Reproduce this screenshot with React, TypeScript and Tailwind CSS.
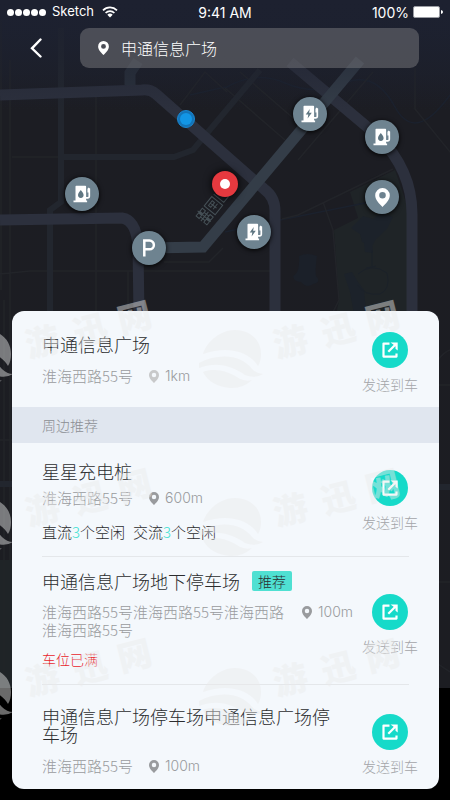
import { useState } from 'react';
import { clsx } from 'clsx';

type PinKind = 'charge' | 'fuel' | 'parking' | 'place' | 'target' | 'me';

interface MapPin {
  kind: PinKind;
  label: string;
  x: number;
  y: number;
}

interface Place {
  id: number;
  name: string;
  address: string;
  distance: string;
  recommended?: boolean;
  full?: boolean;
  slots?: { type: string; free: number }[];
}

const MAP_W = 450;
const MAP_H = 688;

const pins: MapPin[] = [
  { kind: 'me', label: '我的位置', x: 186, y: 119 },
  { kind: 'charge', label: '充电站', x: 310, y: 114 },
  { kind: 'fuel', label: '加油站', x: 382, y: 137 },
  { kind: 'fuel', label: '加油站', x: 82, y: 194 },
  { kind: 'place', label: '地点', x: 382, y: 197 },
  { kind: 'charge', label: '充电站', x: 254, y: 232 },
  { kind: 'parking', label: '停车场', x: 149, y: 248 },
  { kind: 'target', label: '目的地', x: 225, y: 184 },
];

const destination: Place = {
  id: 1,
  name: '申通信息广场',
  address: '淮海西路55号',
  distance: '1km',
};

const nearby: Place[] = [
  {
    id: 2,
    name: '星星充电桩',
    address: '淮海西路55号',
    distance: '600m',
    slots: [
      { type: '直流', free: 3 },
      { type: '交流', free: 3 },
    ],
  },
  {
    id: 3,
    name: '申通信息广场地下停车场',
    address: '淮海西路55号淮海西路55号淮海西路淮海西路55号',
    distance: '100m',
    recommended: true,
    full: true,
  },
  {
    id: 4,
    name: '申通信息广场停车场申通信息广场停车场',
    address: '淮海西路55号',
    distance: '100m',
  },
];

function PinIcon({ className }: { className?: string }) {
  return (
    <svg viewBox="0 0 20 26" className={className} fill="currentColor" aria-hidden="true">
      <path
        fillRule="evenodd"
        d="M10 0a10 10 0 0 0-10 10c0 6.500 6 12 10 16 4-4 10-9.500 10-16A10 10 0 0 0 10 0Zm0 5.500a4.500 4.500 0 1 1 0 9 4.500 4.500 0 0 1 0-9Z"
      />
    </svg>
  );
}

function StationIcon({ kind }: { kind: 'charge' | 'fuel' }) {
  return (
    <svg viewBox="0 0 18 18" className="size-[18px]" aria-hidden="true">
      <path fill="#fff" d="M2.500 1.500q0-.8.800-.8h9q.8 0 .8.800v14h1v1.800H.5v-1.800h2z" />
      <path fill="none" stroke="#fff" strokeWidth="1.700" d="M13 12.800h2q1.300 0 1.300-1.300V3.500M15.300 7.500V4l1-1" />
      {kind === 'charge' ? (
        <path fill="#5f7682" d="M8.800 4 4.700 9.500h2.600l-.7 4 4.200-5.700H8.100z" />
      ) : (
        <path fill="#5f7682" d="M7.800 5C6.500 6.800 5 8.300 5 10.100a2.800 2.800 0 0 0 5.600 0C10.600 8.300 9.100 6.800 7.800 5Z" />
      )}
    </svg>
  );
}

function SendIcon() {
  return (
    <svg viewBox="0 0 16 16" className="size-4" fill="none" stroke="#fff" strokeWidth="2.200" aria-hidden="true">
      <path strokeLinejoin="round" d="M7.500 1.600H1.500v13h13V11.500" />
      <path d="M6.300 9.800 13 3" />
      <path fill="#fff" stroke="none" d="M8.500.5h7.200v8l-2.200-1.800V4.600L11.300 2.600z" />
    </svg>
  );
}

function Roads() {
  return (
    <svg
      viewBox={`0 0 ${MAP_W} ${MAP_H}`}
      className="absolute inset-0 size-full"
      fill="none"
      aria-hidden="true"
    >
      <defs>
        <linearGradient id="night" x1="0" y1="0" x2="0" y2="1">
          <stop offset="0" stopColor="#1d2130" />
          <stop offset=".16" stopColor="#1c1d23" />
          <stop offset="1" stopColor="#1c1d22" />
        </linearGradient>
        <linearGradient id="haze" x1="0" y1="0" x2="0" y2="1">
          <stop offset="0" stopColor="#1d2130" />
          <stop offset="1" stopColor="#1d2130" stopOpacity="0" />
        </linearGradient>
      </defs>
      <rect width={MAP_W} height={MAP_H} fill="url(#night)" />

      {/* park and water */}
      <path fill="#1f2427" d="m350 192 45-22 12 35v115h-72l4-20-5-70 24-12z" />
      <path fill="#1f2427" d="M0 560h12v128H0z" />
      <path fill="#1b2029" d="M299 256q8-4 18 0-2 14-1 20 6 6-3 8-6 5-12-2-7 0-8-6 7-2 6-20z" />
      <path
        fill="#1c222a"
        d="m351 228 12-12 10 3 8-7 12 5-6 12-11 10-4 7-10-4-2-8zM364 243h8l1 10-8-1zM344 274l8-2 6 10 6 8 2 22-12 2-4-22z"
      />
      <path stroke="#1b2129" d="M372 250v16M366 268l10-2M358 274q14-12 29-1 4 16-7 21-16 2-22-9" />

      {/* streams */}
      <path
        stroke="#1b212d"
        strokeWidth="1.500"
        d="M225 88q30-18 60-5t60 0 50 24 55-12M190 95l35-8M225 232l55-12 90-18"
      />

      {/* side streets */}
      <g stroke="#222429" strokeWidth="1.500">
        <path d="M1 20v270M10 60v500M96 96v215M128 271v44M12 157h48M0 274l30-3h244" />
        <path d="m180 105 25-33 22 20M240 72l60 52M225 88l60 52M415 68v41l40 49M298 160l75-88" />
        <path d="m282 219 16-4 95-46M323 202l10 28 6 70-8 16M164 262h45l14-14" />
        <path d="M4 300v388M0 440h12M438 360q6-8 12-10M438 385h12M438 582h12M438 664l12 8" />
      </g>

      {/* secondary roads */}
      <g stroke="#22262e" strokeWidth="6">
        <path d="M61 28v174l-11 8v105M61 157h113l19-7 67-80" />
        <path d="M0 484h12M438 487h12" />
      </g>

      {/* main roads */}
      <g stroke="#2c303d" strokeWidth="11">
        <path d="m0 95 142-5q8-1 14 4l108 95q11 8 11 22v110" />
        <path d="m290 62 88 74q34 34 34 78v100" />
        <path d="m0 220 122-2q14 2 16 28l1 70" />
      </g>
      <g stroke="#343d48" strokeWidth="11">
        <path d="m360 60-157 187-54 1" />
        <path stroke="#2a313c" d="M130 85V73l8-12" />
      </g>

      {/* building blocks */}
      <g transform="rotate(-51 207 212)" stroke="#465157" strokeWidth="1">
        <path d="M197 206h4v4h-4zM203 206h4v4h-4zM197 216h4v4h-4zM203 216h4v4h-4zM196 213h12M202 204v17M199 210v6M205 210v6" />
        <path d="M210 206h12v14h-12zM213 209h6v3h-6zM213 215h7M216 209v8M225 206v13h11M228 209h5" />
      </g>
      <rect width={MAP_W} height="110" fill="url(#haze)" />
    </svg>
  );
}

function PinMarker({ pin }: { pin: MapPin }) {
  const { kind } = pin;
  return (
    <button
      type="button"
      aria-label={pin.label}
      className={clsx(
        'absolute flex -translate-x-1/2 -translate-y-1/2 items-center justify-center rounded-full text-white',
        kind === 'target' && 'size-[26px] bg-[#e5393f] shadow-[0_0_8px_#000]',
        kind === 'me' && 'size-[18px] border border-[#1a86d0] bg-[#1374b8]',
        kind !== 'target' && kind !== 'me' && 'size-[34px] bg-[#6e8390] shadow-[0_1px_5px_#000]',
      )}
      style={{ left: `${(pin.x / MAP_W) * 100}%`, top: `${(pin.y / MAP_H) * 100}%` }}
    >
      {kind === 'target' && <span className="size-[10px] rounded-full bg-white" />}
      {kind === 'me' && <span className="size-3 rounded-full bg-[#1296e6]" />}
      {kind === 'place' && <PinIcon className="h-[19px] w-[15px]" />}
      {kind === 'parking' && (
        <svg viewBox="0 0 14 18" className="h-[18px] w-[14px]" fill="none" stroke="currentColor" strokeWidth="2.500" aria-hidden="true">
          <path d="M2.300 17.500V1.500h5.200a4.400 4.400 0 0 1 0 8.800H2.300" />
        </svg>
      )}
      {(kind === 'charge' || kind === 'fuel') && <StationIcon kind={kind} />}
    </button>
  );
}

function StatusBar() {
  return (
    <div className="grid h-6 grid-cols-3 items-center px-[7px] font-['Inter','Liberation_Sans',sans-serif] text-[14px] text-white">
      <div className="flex items-center">
        <div className="flex gap-[1px]" aria-hidden="true">
          {[0, 1, 2, 3, 4].map((dot) => (
            <span key={dot} className="size-[7px] rounded-full bg-white" />
          ))}
        </div>
        <span className="ml-[6px] text-[13px]">Sketch</span>
        <svg viewBox="0 0 16 12" className="ml-2 h-3 w-4" fill="none" stroke="#fff" strokeWidth="1.700" aria-hidden="true">
          <path d="M1 4.300a10 10 0 0 1 14 0M3.600 7a6.300 6.300 0 0 1 8.800 0" />
          <path fill="#fff" stroke="none" d="M5.300 8.800a3.900 3.900 0 0 1 5.400 0L8 11.600z" />
        </svg>
      </div>
      <span className="text-center">9:41 AM</span>
      <div className="flex items-center justify-end gap-1">
        <span>100%</span>
        <svg viewBox="0 0 30 12" className="h-3 w-[30px]" aria-hidden="true">
          <rect x=".5" y=".5" width="26" height="11" rx="1.500" fill="#fff" stroke="#9a9ca3" />
          <path fill="#fff" d="M28 4q2 .5 2 2t-2 2z" />
        </svg>
      </div>
    </div>
  );
}

function SendButton() {
  return (
    <button type="button" className="flex shrink-0 flex-col items-center gap-[7px] text-[#a3a5a8]">
      <span className="flex size-9 items-center justify-center rounded-full bg-[#16dac9]">
        <SendIcon />
      </span>
      <span className="text-[14px] leading-[18px]">发送到车</span>
    </button>
  );
}

function Location({ place, className }: { place: Place; className?: string }) {
  return (
    <div className={clsx('flex items-start gap-4 text-[15px] leading-[18px] text-[#999b9e]', className)}>
      <p className="max-w-[244px]">{place.address}</p>
      <p className="flex shrink-0 items-center gap-1.5">
        <PinIcon className={clsx('h-[13px] w-[10px]', place.id === 1 && 'text-[#c8c9ca]')} />
        <span className="font-['Inter','Liberation_Sans',sans-serif] text-[14px]">{place.distance}</span>
      </p>
    </div>
  );
}

function Heading({ place }: { place: Place }) {
  return (
    <div className="flex items-center gap-3">
      <h2 className="max-w-[300px] text-[18px] leading-[18px] text-[#2b2c2e]">{place.name}</h2>
      {place.recommended && (
        <span className="rounded-[2px] bg-[#4fe0d2] px-1.5 text-[14px] leading-5 text-[#2b2c2e]">推荐</span>
      )}
    </div>
  );
}

const markRows = [0, 168, 338];
const wingCols = [-250, 0];
const wordCols = [0, 248];

function Watermark() {
  return (
    <svg
      viewBox="0 0 450 800"
      className="pointer-events-none absolute inset-x-0 top-0 w-full opacity-45"
      aria-hidden="true"
    >
      {markRows.map((y) => (
        <g key={y} fill="#ebebeb">
          {wingCols.map((x) => (
            <g key={x} transform={`translate(${x} ${y})`}>
              <path d="M203 354c4-13 18-24 32-24 15 0 26 10 26 24 0 5-1 9-3 12-8-14-30-21-55-12z" />
              <path d="M199 363c22-11 43-7 53 6q5 5 11 5-8 5-18 1c-12-9-28-14-46-7z" />
              <path d="M203 372c13-5 27 0 37 7q7 3 12 1-10 9-22 8-20-2-27-16z" />
            </g>
          ))}
          {wordCols.map((x) => (
            <g
              key={x}
              transform={`translate(${x} ${y})`}
              className="font-['Noto_Sans_CJK_SC',sans-serif] text-[34px] font-black"
            >
              <text transform="translate(29 358) rotate(-14)">游</text>
              <text transform="translate(77 346) rotate(-14)">迅</text>
              <text transform="translate(121 334) rotate(-14)">网</text>
            </g>
          ))}
        </g>
      ))}
    </svg>
  );
}

const rowPadding = ['pt-[19px] pb-[15px]', 'pt-[14px] pb-4', 'pt-[22px] pb-[14px]'];
const locationGap = ['mt-[9px]', 'mt-3', 'mt-[14px]'];
const sendOffset = ['mt-2', 'mt-[23px]', 'mt-[7px]'];

export default function App() {
  const [query, setQuery] = useState('申通信息广场');

  return (
    <div className="relative min-h-screen overflow-hidden bg-black font-['Noto_Sans_CJK_SC','Noto_Sans',sans-serif] font-light">
      <div className="absolute inset-x-0 top-0 aspect-[450/688]">
        <Roads />
        {pins.map((pin) => (
          <PinMarker key={`${pin.x}-${pin.y}`} pin={pin} />
        ))}
      </div>

      <header className="relative font-normal">
        <StatusBar />
        <div className="mt-1 flex items-center pr-[31px] pl-6">
          <button type="button" aria-label="返回" className="flex h-10 w-6 items-center justify-center">
            <svg viewBox="0 0 12 20" className="h-5 w-3" fill="none" stroke="#fff" strokeWidth="2.400" strokeLinecap="round" aria-hidden="true">
              <path d="M10.500 1.500 2 10.300l8.500 8.200" />
            </svg>
          </button>
          <label className="ml-8 flex h-10 flex-1 items-center gap-3 rounded-[9px] bg-[#7a7a7e]/50 pl-[18px] text-white">
            <PinIcon className="h-[14px] w-[11px] shrink-0" />
            <input
              type="text"
              aria-label="搜索地点"
              value={query}
              onChange={(e) => setQuery(e.target.value)}
              className="min-w-0 flex-1 bg-transparent text-[16px] font-light outline-none"
            />
          </label>
        </div>
      </header>

      <main className="relative mx-3 mt-[243px] mr-[11px] mb-[11px] overflow-hidden rounded-xl bg-[#f4f8fc]">
        <section className="flex items-start justify-between pt-[21px] pr-[21px] pb-[14px] pl-[30px]">
          <div className="pt-[3px]">
            <Heading place={destination} />
            <Location place={destination} className="mt-[14px]" />
          </div>
          <SendButton />
        </section>

        <h3 className="bg-[#e0e6ef] px-[30px] text-[14px] leading-9 text-[#8b8e93]">周边推荐</h3>

        <ul>
          {nearby.map((place, i) => (
            <li key={place.id}>
              {i > 0 && <hr className="mx-[30px] border-[#e4e7ea]" />}
              <div className={clsx('flex items-start justify-between pr-[21px] pl-[30px]', rowPadding[i])}>
                <div>
                  <Heading place={place} />
                  <Location place={place} className={locationGap[i]} />
                  {place.slots && (
                    <p className="mt-4 flex gap-2 text-[15px] leading-[18px] text-[#2b2c2e]">
                      {place.slots.map((slot) => (
                        <span key={slot.type}>
                          {slot.type}
                          <span className="text-[#36dfd0]">{slot.free}</span>
                          个空闲
                        </span>
                      ))}
                    </p>
                  )}
                  {place.full && (
                    <p className="mt-[11px] text-[14px] leading-[18px] text-[#e8252b]">车位已满</p>
                  )}
                </div>
                <div className={sendOffset[i]}>
                  <SendButton />
                </div>
              </div>
            </li>
          ))}
        </ul>
      </main>

      <Watermark />
    </div>
  );
}
